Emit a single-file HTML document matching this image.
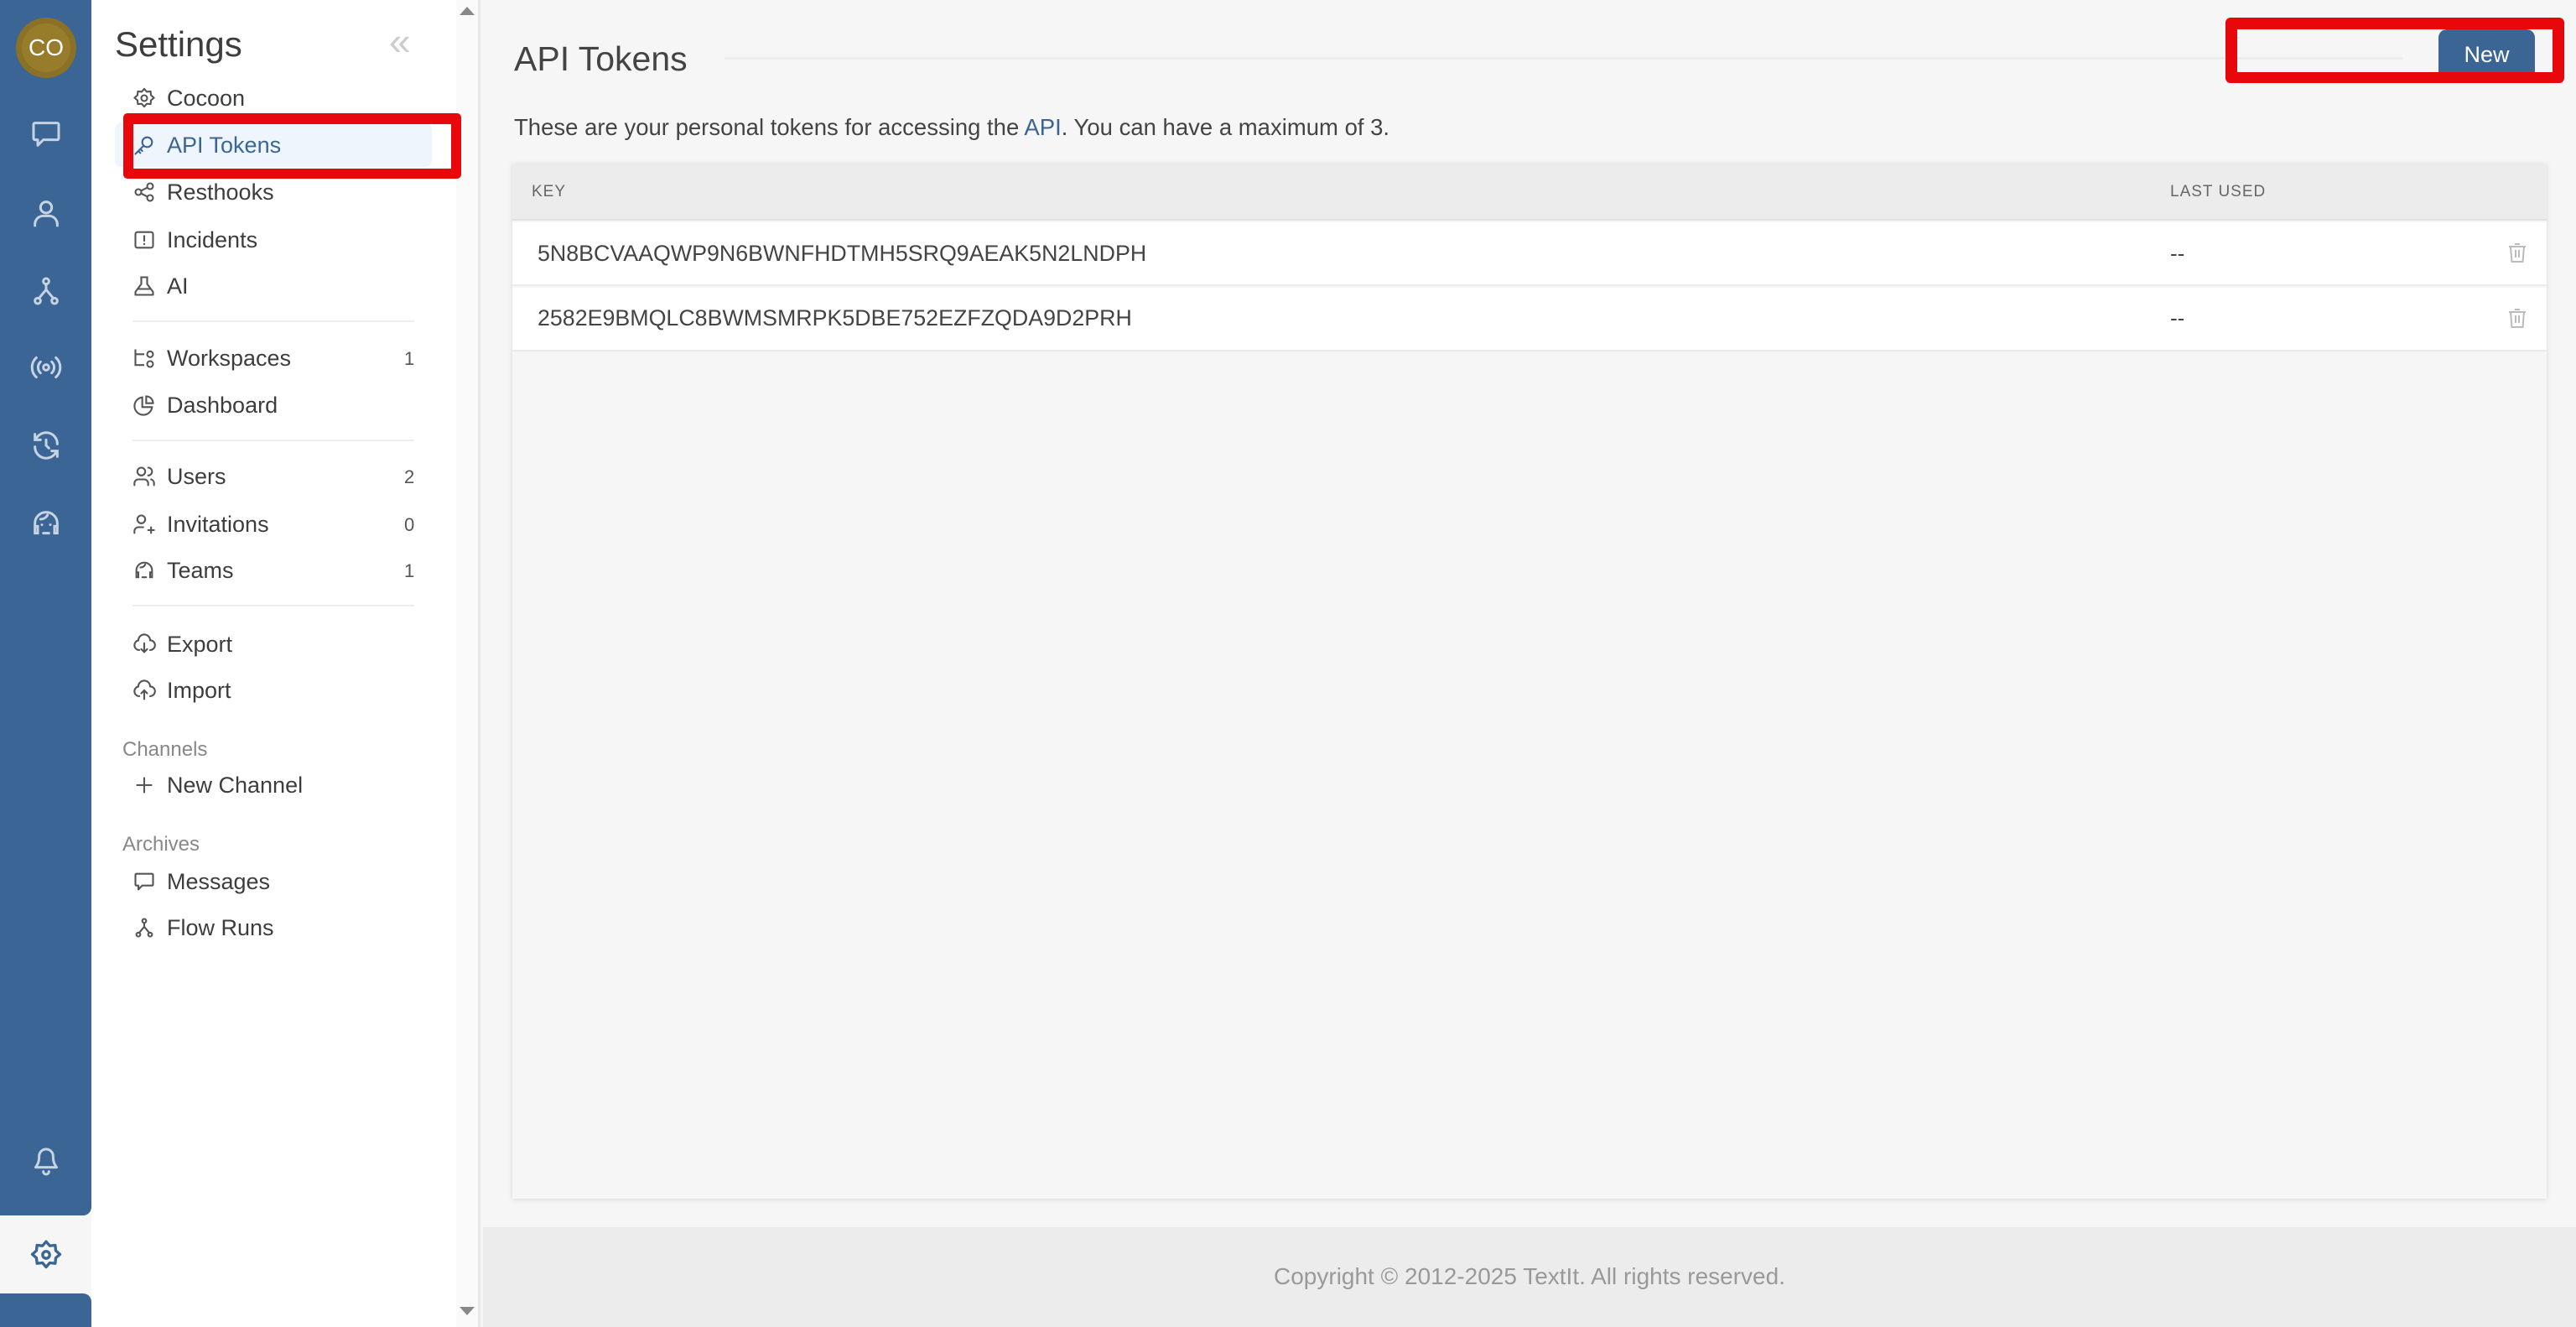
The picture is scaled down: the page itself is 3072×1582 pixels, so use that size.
<!DOCTYPE html>
<html><head><meta charset="utf-8">
<style>
*{margin:0;padding:0;box-sizing:border-box}
body{width:3072px;height:1582px;overflow:hidden;background:#f6f6f6;font-family:"Liberation Sans",sans-serif;position:relative;color:#444}
.abs{position:absolute}
.rail{left:0;top:0;width:109px;height:1449px;background:#3a6594;border-bottom-right-radius:10px}
.rail2{left:0;top:1542px;width:109px;height:40px;background:#3a6594;border-top-right-radius:10px}
.ri{position:absolute;left:35px;width:40px;height:40px}
.side{left:109px;top:0;width:435px;height:1582px;background:#fff}
.sb{left:544px;top:0;width:29px;height:1582px;background:#fafafa;border-right:3px solid #e8e8e8}
.nav{position:absolute;left:199px;font-size:27px;color:#3d3d3d;line-height:30px;transform:translateY(-15px)}
.ic{position:absolute;left:158px;width:28px;height:28px;transform:translateY(-14px)}
.cnt{position:absolute;left:482px;font-size:22px;color:#555;transform:translateY(-12px)}
.div{position:absolute;left:158px;width:336px;height:2px;background:#eee}
.lbl{position:absolute;left:146px;font-size:24px;color:#888;transform:translateY(-13px)}
svg{display:block}
</style></head><body>
<div class="abs rail"></div>
<div class="abs rail2"></div>
<div class="abs" style="left:19px;top:21px;width:72px;height:72px;border-radius:50%;background:#8a7126;"></div>
<div class="abs" style="left:26px;top:28px;width:58px;height:58px;border-radius:50%;background:#977c2c;color:#fff;font-size:28px;line-height:58px;text-align:center">CO</div>
<svg class="ri" style="top:140px" viewBox="0 0 24 24" fill="none" stroke="#c6d3e3" stroke-width="1.8" stroke-linecap="round" stroke-linejoin="round"><path d="M4 4h16a1 1 0 0 1 1 1v10a1 1 0 0 1-1 1H10l-4 4v-4H4a1 1 0 0 1-1-1V5a1 1 0 0 1 1-1z"/></svg>
<svg class="ri" style="top:234px" viewBox="0 0 24 24" fill="none" stroke="#c6d3e3" stroke-width="1.8" stroke-linecap="round"><circle cx="12" cy="8" r="4"/><path d="M4 21v-1a6 6 0 0 1 6-6h4a6 6 0 0 1 6 6v1"/></svg>
<svg class="ri" style="top:327px" viewBox="0 0 24 24" fill="none" stroke="#c6d3e3" stroke-width="1.8" stroke-linecap="round"><circle cx="12" cy="5" r="2"/><circle cx="6" cy="19" r="2"/><circle cx="18" cy="19" r="2"/><path d="M12 7v4M12 11l-5 6M12 11l5 6"/></svg>
<svg class="ri" style="top:418px" viewBox="0 0 24 24" fill="none" stroke="#c6d3e3" stroke-width="1.8" stroke-linecap="round"><circle cx="12" cy="12" r="2"/><path d="M8 8a5.5 5.5 0 0 0 0 8M16 8a5.5 5.5 0 0 1 0 8M5 5a9.5 9.5 0 0 0 0 14M19 5a9.5 9.5 0 0 1 0 14"/></svg>
<svg class="ri" style="top:511px" viewBox="0 0 24 24" fill="none" stroke="#c6d3e3" stroke-width="1.8" stroke-linecap="round"><path d="M20 11A8 8 0 0 0 5 7M4 4v4h4M4 13a8 8 0 0 0 15 4M20 20v-4h-4M12 8v4l2 2"/></svg>
<svg class="ri" style="top:604px" viewBox="0 0 24 24" fill="none" stroke="#c6d3e3" stroke-width="1.8" stroke-linecap="round"><path d="M4 15v-3a8 8 0 0 1 16 0v3M4 14h2v5H4zM18 14h2v5h-2zM8 9c2 0 4-1 5-3M9 13h.01M15 13h.01M10 19h4"/></svg>
<svg class="ri" style="top:1365px" viewBox="0 0 24 24" fill="none" stroke="#c6d3e3" stroke-width="1.8" stroke-linecap="round" stroke-linejoin="round"><path d="M12 3a5 5 0 0 1 5 5c0 4 1 6 2.5 8h-15C6 14 7 12 7 8a5 5 0 0 1 5-5zM10 19a2 2 0 0 0 4 0"/></svg>
<svg class="ri" style="top:1476px" viewBox="0 0 24 24" fill="none" stroke="#3a6594" stroke-width="2" stroke-linejoin="round"><path d="M12 2.5l2.6 3 3.9-.4.4 3.9 3 2.6-3 2.6-.4 3.9-3.9-.4-2.6 3-2.6-3-3.9.4-.4-3.9-3-2.6 3-2.6.4-3.9 3.9.4z"/><circle cx="12" cy="12" r="2.5"/></svg>

<div class="abs side"></div>
<div class="abs sb"></div>
<div class="abs" style="left:548px;top:8px;width:0;height:0;border-left:9px solid transparent;border-right:9px solid transparent;border-bottom:10px solid #888"></div>
<div class="abs" style="left:548px;top:1558px;width:0;height:0;border-left:9px solid transparent;border-right:9px solid transparent;border-top:10px solid #888"></div>

<div class="abs" style="left:137px;top:29px;font-size:42px;color:#3d3d3d">Settings</div>
<div class="abs" style="left:464px;top:22px;font-size:46px;color:#ccc;letter-spacing:-4px">«</div>

<div class="abs" style="left:137px;top:146px;width:378px;height:53px;background:#eef5fd;border-radius:8px"></div>

<svg class="ic" style="top:117px" viewBox="0 0 24 24" fill="none" stroke="#555" stroke-width="1.8" stroke-linejoin="round"><path d="M12 2.5l2.6 3 3.9-.4.4 3.9 3 2.6-3 2.6-.4 3.9-3.9-.4-2.6 3-2.6-3-3.9.4-.4-3.9-3-2.6 3-2.6.4-3.9 3.9.4z"/><circle cx="12" cy="12" r="3"/></svg>
<div class="nav" style="top:117px">Cocoon</div>
<svg class="ic" style="top:173px" viewBox="0 0 24 24" fill="none" stroke="#3a6594" stroke-width="1.8" stroke-linecap="round"><circle cx="15" cy="9" r="5"/><path d="M11.5 12.5L3 21M6 18l2 2M8 16l2 2"/></svg>
<div class="nav" style="top:173px;color:#3a6594">API Tokens</div>
<svg class="ic" style="top:229px" viewBox="0 0 24 24" fill="none" stroke="#555" stroke-width="1.8"><circle cx="6" cy="12" r="3"/><circle cx="18" cy="6" r="3"/><circle cx="18" cy="18" r="3"/><path d="M8.7 10.7l6.6-3.4M8.7 13.3l6.6 3.4"/></svg>
<div class="nav" style="top:229px">Resthooks</div>
<svg class="ic" style="top:286px" viewBox="0 0 24 24" fill="none" stroke="#555" stroke-width="1.8" stroke-linecap="round"><rect x="3" y="4" width="18" height="16" rx="2"/><path d="M12 8v5M12 16v.5"/></svg>
<div class="nav" style="top:286px">Incidents</div>
<svg class="ic" style="top:341px" viewBox="0 0 24 24" fill="none" stroke="#555" stroke-width="1.8" stroke-linejoin="round"><path d="M8 3h8M9 3v7l-6 8v3h18v-3l-6-8V3M5 15h14"/></svg>
<div class="nav" style="top:341px">AI</div>
<div class="div" style="top:382px"></div>
<svg class="ic" style="top:427px" viewBox="0 0 24 24" fill="none" stroke="#555" stroke-width="1.8"><path d="M3 3v16h9M3 8h9"/><circle cx="18" cy="8" r="3"/><circle cx="18" cy="18" r="3"/></svg>
<div class="nav" style="top:427px">Workspaces</div><div class="cnt" style="top:427px">1</div>
<svg class="ic" style="top:483px" viewBox="0 0 24 24" fill="none" stroke="#555" stroke-width="1.8"><path d="M10 4a9 9 0 1 0 10 10H10z"/><path d="M14 3a7 7 0 0 1 7 7h-7z"/></svg>
<div class="nav" style="top:483px">Dashboard</div>
<div class="div" style="top:524px"></div>
<svg class="ic" style="top:568px" viewBox="0 0 24 24" fill="none" stroke="#555" stroke-width="1.8" stroke-linecap="round"><circle cx="9" cy="7" r="4"/><path d="M2 21v-2a4 4 0 0 1 4-4h6a4 4 0 0 1 4 4v2M16 3a4 4 0 0 1 0 8M22 21v-2a4 4 0 0 0-3-4"/></svg>
<div class="nav" style="top:568px">Users</div><div class="cnt" style="top:568px">2</div>
<svg class="ic" style="top:625px" viewBox="0 0 24 24" fill="none" stroke="#555" stroke-width="1.8" stroke-linecap="round"><circle cx="9" cy="7" r="4"/><path d="M2 21v-2a4 4 0 0 1 4-4h5M19 15v6M16 18h6"/></svg>
<div class="nav" style="top:625px">Invitations</div><div class="cnt" style="top:625px">0</div>
<svg class="ic" style="top:680px" viewBox="0 0 24 24" fill="none" stroke="#555" stroke-width="1.8" stroke-linecap="round"><path d="M4 15v-3a8 8 0 0 1 16 0v3M4 14h2v5H4zM18 14h2v5h-2zM8 9c2 0 4-1 5-3M10 19h4"/></svg>
<div class="nav" style="top:680px">Teams</div><div class="cnt" style="top:680px">1</div>
<div class="div" style="top:721px"></div>
<svg class="ic" style="top:768px" viewBox="0 0 24 24" fill="none" stroke="#555" stroke-width="1.8" stroke-linecap="round"><path d="M7 18a5 5 0 0 1-1-9.9A6 6 0 0 1 18 8a4 4 0 0 1 0 10M12 11v9M9 17l3 3 3-3"/></svg>
<div class="nav" style="top:768px">Export</div>
<svg class="ic" style="top:823px" viewBox="0 0 24 24" fill="none" stroke="#555" stroke-width="1.8" stroke-linecap="round"><path d="M7 18a5 5 0 0 1-1-9.9A6 6 0 0 1 18 8a4 4 0 0 1 0 10M12 21v-9M9 15l3-3 3 3"/></svg>
<div class="nav" style="top:823px">Import</div>
<div class="lbl" style="top:893px">Channels</div>
<svg class="ic" style="top:936px" viewBox="0 0 24 24" fill="none" stroke="#555" stroke-width="1.8"><path d="M12 4v16M4 12h16"/></svg>
<div class="nav" style="top:936px">New Channel</div>
<div class="lbl" style="top:1006px">Archives</div>
<svg class="ic" style="top:1051px" viewBox="0 0 24 24" fill="none" stroke="#555" stroke-width="1.8" stroke-linejoin="round"><path d="M4 4h16a1 1 0 0 1 1 1v10a1 1 0 0 1-1 1H10l-4 4v-4H4a1 1 0 0 1-1-1V5a1 1 0 0 1 1-1z"/></svg>
<div class="nav" style="top:1051px">Messages</div>
<svg class="ic" style="top:1106px" viewBox="0 0 24 24" fill="none" stroke="#555" stroke-width="1.8"><circle cx="12" cy="5" r="2"/><circle cx="6" cy="19" r="2"/><circle cx="18" cy="19" r="2"/><path d="M12 7v4M12 11l-5 6M12 11l5 6"/></svg>
<div class="nav" style="top:1106px">Flow Runs</div>

<div class="abs" style="left:147px;top:135px;width:403px;height:78px;border:12px solid #e8070a;border-top-width:13px;border-radius:5px"></div>

<div class="abs" style="left:613px;top:45px;font-size:41px;color:#444;line-height:50px">API Tokens</div>
<div class="abs" style="left:864px;top:68px;width:2001px;height:3px;background:#ececec"></div>
<div class="abs" style="left:2908px;top:35px;width:115px;height:62px;background:#3a6594;border-radius:10px;color:#fff;font-size:27px;text-align:center;line-height:60px">New</div>
<div class="abs" style="left:2654px;top:21px;width:404px;height:78px;border:14px solid #e8070a;border-bottom-width:13px;border-radius:6px"></div>

<div class="abs" style="left:613px;top:136px;font-size:27.5px;color:#444;line-height:32px">These are your personal tokens for accessing the <span style="color:#3a6594">API</span>. You can have a maximum of 3.</div>

<div class="abs" style="left:611px;top:195px;width:2426px;height:1234px;background:#f6f6f6;box-shadow:0 1px 6px rgba(0,0,0,.13)"></div>
<div class="abs" style="left:611px;top:195px;width:2426px;height:68px;background:#ececec;border-bottom:2px solid #e2e2e2"></div>
<div class="abs" style="left:634px;top:218px;font-size:19px;color:#666;letter-spacing:1px">KEY</div>
<div class="abs" style="left:2588px;top:218px;font-size:19px;color:#666;letter-spacing:1px">LAST USED</div>
<div class="abs" style="left:611px;top:265px;width:2426px;height:76px;background:#fff;border-bottom:2px solid #ebebeb"></div>
<div class="abs" style="left:611px;top:343px;width:2426px;height:76px;background:#fff;border-bottom:2px solid #ebebeb"></div>
<div class="abs" style="left:641px;top:287px;font-size:26.8px;color:#444">5N8BCVAAQWP9N6BWNFHDTMH5SRQ9AEAK5N2LNDPH</div>
<div class="abs" style="left:641px;top:364px;font-size:26.8px;color:#444">2582E9BMQLC8BWMSMRPK5DBE752EZFZQDA9D2PRH</div>
<div class="abs" style="left:2588px;top:287px;font-size:26px;color:#444">--</div>
<div class="abs" style="left:2588px;top:364px;font-size:26px;color:#444">--</div>
<svg class="abs" style="left:2990px;top:289px" width="24" height="26" viewBox="0 0 24 26" fill="none" stroke="#bbb" stroke-width="2"><path d="M2 5h20M9 2h6M4 5l1.5 18h13L20 5M10 9v9M14 9v9"/></svg>
<svg class="abs" style="left:2990px;top:367px" width="24" height="26" viewBox="0 0 24 26" fill="none" stroke="#bbb" stroke-width="2"><path d="M2 5h20M9 2h6M4 5l1.5 18h13L20 5M10 9v9M14 9v9"/></svg>

<div class="abs" style="left:576px;top:1463px;width:2496px;height:119px;background:#ececec"></div>
<div class="abs" style="left:576px;top:1506px;width:2496px;text-align:center;font-size:28px;color:#999">Copyright © 2012-2025 TextIt. All rights reserved.</div>
</body></html>
